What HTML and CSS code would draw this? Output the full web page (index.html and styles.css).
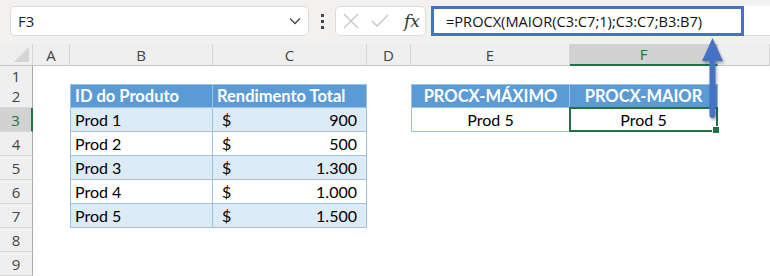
FILE: index.html
```html
<!DOCTYPE html>
<html lang="pt-BR">
<head>
    <meta charset="UTF-8">
    <title>PROCX MAIOR</title>
    <link rel="stylesheet" href="styles.css">
</head>
<body>
    <div class="toolbar">
        <div class="namebox">
            <span>F3</span>
            <svg class="chevron" width="12" height="8" viewBox="0 0 12 8"><path d="M1 1.5 L6 6.5 L11 1.5" fill="none" stroke="#444" stroke-width="1.3"/></svg>
        </div>
        <div class="dots"><i></i><i></i><i></i></div>
        <div class="fxbox">
            <svg width="16" height="16" viewBox="0 0 16 16"><path d="M1 1 L15 15 M15 1 L1 15" stroke="#c4c4c4" stroke-width="1.3"/></svg>
            <svg width="18" height="16" viewBox="0 0 18 16"><path d="M1 8 L6 13 L17 2" fill="none" stroke="#c4c4c4" stroke-width="1.3"/></svg>
            <span class="fx">fx</span>
        </div>
        <div class="formula">
            <div class="formula-text">=PROCX(MAIOR(C3:C7;1);C3:C7;B3:B7)</div>
        </div>
    </div>

    <div class="sheet">
        <div class="row colhdr">
            <div class="corner"></div>
            <div>A</div><div>B</div><div>C</div><div>D</div><div>E</div><div class="sel">F</div><div></div>
        </div>
        <div class="row r1">
            <div class="rh">1</div>
            <div></div><div></div><div></div><div></div><div></div><div></div><div></div>
        </div>
        <div class="row">
            <div class="rh">2</div>
            <div></div>
            <div class="th first top">ID do Produto</div>
            <div class="th top">Rendimento Total</div>
            <div></div>
            <div class="th first top center">PROCX-MÁXIMO</div>
            <div class="th top center">PROCX-MAIOR</div>
            <div></div>
        </div>
        <div class="row">
            <div class="rh sel">3</div>
            <div></div>
            <div class="td first band">Prod 1</div>
            <div class="td money band"><span>$</span><span>900</span></div>
            <div></div>
            <div class="td first center">Prod 5</div>
            <div class="td center active">Prod 5</div>
            <div></div>
        </div>
        <div class="row">
            <div class="rh">4</div>
            <div></div>
            <div class="td first">Prod 2</div>
            <div class="td money"><span>$</span><span>500</span></div>
            <div></div><div></div><div></div><div></div>
        </div>
        <div class="row">
            <div class="rh">5</div>
            <div></div>
            <div class="td first band">Prod 3</div>
            <div class="td money band"><span>$</span><span>1.300</span></div>
            <div></div><div></div><div></div><div></div>
        </div>
        <div class="row">
            <div class="rh">6</div>
            <div></div>
            <div class="td first">Prod 4</div>
            <div class="td money"><span>$</span><span>1.000</span></div>
            <div></div><div></div><div></div><div></div>
        </div>
        <div class="row">
            <div class="rh">7</div>
            <div></div>
            <div class="td first band">Prod 5</div>
            <div class="td money band"><span>$</span><span>1.500</span></div>
            <div></div><div></div><div></div><div></div>
        </div>
        <div class="row">
            <div class="rh">8</div>
            <div></div><div></div><div></div><div></div><div></div><div></div><div></div>
        </div>
        <div class="row">
            <div class="rh">9</div>
            <div></div><div></div><div></div><div></div><div></div><div></div><div></div>
        </div>
    </div>

    <!-- seta apontando para a barra de fórmulas -->
    <svg class="arrow" width="40" height="100" viewBox="0 0 40 100">
        <defs>
            <filter id="sombra" x="-50%" y="-20%" width="200%" height="140%">
                <feDropShadow dx="1" dy="2" stdDeviation="1.5" flood-color="#000" flood-opacity="0.35"/>
            </filter>
        </defs>
        <g filter="url(#sombra)" fill="#4472c4">
            <polygon points="12.5,2 2,25 23,25"/>
            <rect x="9.5" y="20" width="6" height="62" rx="3"/>
        </g>
    </svg>
</body>
</html>
```

FILE: styles.css
```css
* {
    box-sizing: border-box;
    margin: 0;
    padding: 0;
}

body {
    width: 770px;
    height: 276px;
    overflow: hidden;
    position: relative;
    background-color: #fff;
    font-family: 'Open Sans', 'Noto Sans', sans-serif;
}

/* barra de fórmulas */
.toolbar {
    height: 44px;
    background-color: #f3f0f0;
    display: flex;
    align-items: flex-start;
    padding-top: 6px;
    padding-left: 10px;
}

.namebox {
    width: 299px;
    height: 30px;
    background-color: #fff;
    border: 1px solid #dcdcdc;
    border-radius: 5px;
    display: flex;
    align-items: center;
    justify-content: space-between;
    padding: 0 7px 0 7px;
    font-size: 15px;
    color: #222;
}

.dots {
    width: 26px;
    height: 30px;
    display: flex;
    flex-direction: column;
    align-items: center;
    justify-content: center;
    gap: 3px;
}

.dots i {
    width: 3px;
    height: 3px;
    background-color: #444;
}

.fxbox {
    width: 91px;
    height: 30px;
    background-color: #fff;
    border: 1px solid #dcdcdc;
    border-radius: 5px;
    display: flex;
    align-items: center;
    gap: 12px;
    padding-left: 7px;
}

.fx {
    font-family: 'DejaVu Serif', 'Liberation Serif', serif;
    font-style: italic;
    font-size: 17px;
    color: #333;
    margin-left: 3px;
}

.formula {
    flex: 1;
    height: 30px;
    margin-left: 5px;
    background-color: #fff;
    border-bottom: 1px solid #dcdcdc;
}

.formula-text {
    width: 313px;
    height: 30px;
    border: 3px solid #4472c4;
    padding-left: 12px;
    font-size: 14.6px;
    line-height: 24px;
    color: #111;
}

/* planilha */
.row {
    display: grid;
    grid-template-columns: 33px 37px 143px 154px 44px 159px 148px 1fr;
    height: 24px;
}

.row.r1 {
    height: 18px;
}

.colhdr {
    height: 22px;
    background-color: #efefef;
    border-bottom: 1px solid #c8c8c8;
}

.colhdr div {
    display: flex;
    align-items: center;
    justify-content: center;
    border-right: 1px solid #d6d6d6;
    font-size: 15px;
    color: #444;
}

.colhdr .sel {
    background-color: #d2d2d2;
    color: #217346;
    border-bottom: 2px solid #217346;
    margin-bottom: -1px;
}

.corner {
    position: relative;
}

.corner::after {
    content: '';
    position: absolute;
    right: 3px;
    bottom: 3px;
    width: 15px;
    height: 15px;
    background-color: #d4d4d4;
    clip-path: polygon(100% 0, 100% 100%, 0 100%);
}

.rh {
    background-color: #efefef;
    border-right: 1px solid #a9a9a9;
    border-bottom: 1px solid #d8d8d8;
    display: flex;
    align-items: center;
    justify-content: center;
    font-size: 15px;
    color: #444;
}

.rh.sel {
    background-color: #d2d2d2;
    color: #217346;
    border-right: 2px solid #217346;
}

/* tabelas */
.th, .td {
    display: flex;
    align-items: center;
    padding-left: 4px;
    font-family: 'Lato', 'Noto Sans', sans-serif;
    font-size: 16px;
    border-right: 1px solid #9bc2e6;
    border-bottom: 1px solid #9bc2e6;
}

.th {
    background-color: #5b9bd5;
    color: #fff;
    font-weight: bold;
    font-size: 16.5px;
}

.td {
    color: #000;
}

.first {
    border-left: 1px solid #9bc2e6;
}

.top {
    border-top: 1px solid #9bc2e6;
}

.center {
    justify-content: center;
    padding-left: 0;
}

.band {
    background-color: #ddebf7;
}

.money {
    justify-content: space-between;
    padding: 0 9px 0 9px;
}

.active {
    position: relative;
    border: 2px solid #217346;
    margin: -1px 0 0 -1px;
}

.active::after {
    content: '';
    position: absolute;
    right: -4px;
    bottom: -4px;
    width: 6px;
    height: 6px;
    background-color: #217346;
    border: 1px solid #fff;
}

.arrow {
    position: absolute;
    left: 700px;
    top: 36px;
}
```
